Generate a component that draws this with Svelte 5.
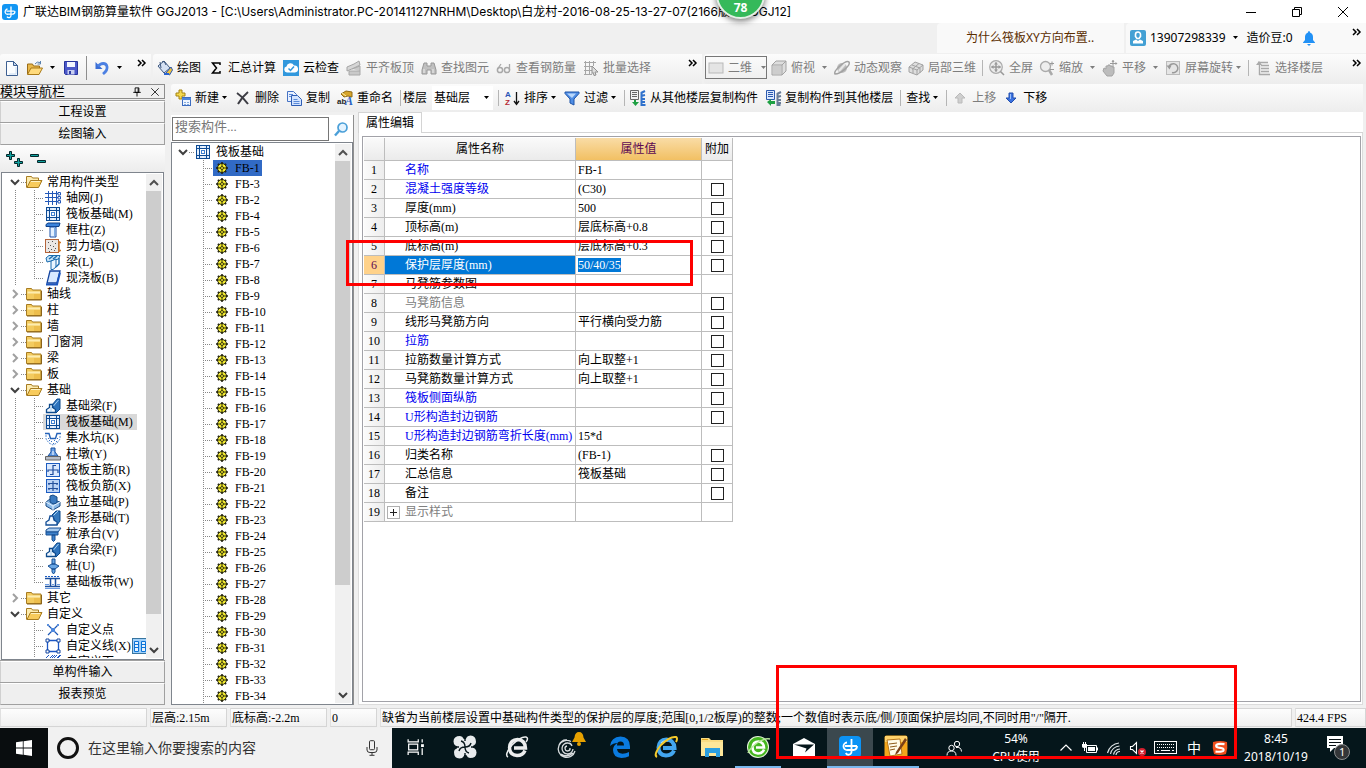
<script>
  const gear =
    '<path d="M7 0h2v16H7zM0 7h16v2H0zM3.200 1.800l11 11-1.400 1.400-11-11zM12.800 1.800l1.400 1.400-11 11-1.400-1.400z" fill="#1b1b08"/><circle cx="8" cy="8" r="6" fill="#f6ee30" stroke="#1b1b08" stroke-width="1.300"/><path d="M8 2.500v3M8 10.500v3M2.500 8h3M10.500 8h3" stroke="#1b1b08" stroke-width="1.200"/><circle cx="8" cy="8" r="2" fill="#f6ee30" stroke="#1b1b08" stroke-width="1.200"/>';
  const raft =
    '<rect x="1.500" y="1.500" width="13" height="13" fill="#dceafc" stroke="#0d4a93"/><path d="M4.500 1v14M11.500 1v14M1 4.500h14M1 11.500h14" stroke="#0d4a93"/><rect x="5" y="5" width="6" height="6" fill="#fff"/><path d="M6 6.500h4M6 9.500h4M6.500 6v4M9.500 6v4" stroke="#3f7fd0"/><path d="M2 8h2M12 8h2M8 2v2M8 12v2" stroke="#fff"/>';
  const beam =
    '<path d="M7 7l5-6h3v10l-4 4z" fill="#2d73bd" stroke="#0d4a8c"/><path d="M8.500 8l5-6" stroke="#a9d2f4"/><path d="M1.500 14.500v-3l3-2V6.500h3v3l3 2v3z" fill="#f2f8ff" stroke="#0d4a8c" stroke-width="1.300"/><path d="M6 9v5" stroke="#9ec9ec"/>';
  const icons = {
    logo: '<rect x="0" y="0" width="16" height="16" rx="3" fill="#1296f3"/><path d="M9 2.500v9a2.200 2.200 0 0 1-4 1.200M4.500 7.200h8M5.500 5a3 3 0 0 0-2.300 3.600A2.500 2.500 0 0 0 6 10.200h5a2.600 2.600 0 0 0 1.800-3" fill="none" stroke="#fff" stroke-width="1.300"/>',
    fnew: '<path d="M2.500 1.500h7l4 4v10h-11z" fill="#fbfdff" stroke="#3d5f91"/><path d="M9.500 1.500v4h4z" fill="#c6d7ee" stroke="#3d5f91"/><path d="M12 7v7H5" fill="none" stroke="#c9dcf2"/>',
    open: '<path d="M.5 14V4h5l1 2h6v3" fill="#e9b84b" stroke="#9a6c17"/><path d="M.5 14.500L4 8h11.500l-3.500 6.500z" fill="#ffda7c" stroke="#a87918"/><path d="M8 4q2-3 5-1.500M13.500 1v3h-3" fill="none" stroke="#5880ad"/>',
    save: '<path d="M1.500 1.500h13v13h-12l-1-1z" fill="#4b58c9" stroke="#27339b"/><path d="M4 2h8v5H4z" fill="#f2f5ff"/><path d="M4.500 10h7v4.500h-7z" fill="#c8cff0"/><path d="M6 11h2v3H6z" fill="#303da3"/>',
    undo: '<path d="M1.500 2v7h7z" fill="#3a6ed6"/><path d="M4 6.500C7 2.500 12 2.500 13 6.500c.7 3-1.500 5.500-4 7.500" fill="none" stroke="#4c80e2" stroke-width="2.800"/>',
    paint: '<path d="M1 6l6-5 6 7-6 5z" fill="#d5e1f4" stroke="#3c567e"/><path d="M4 8L3 2M5 2q2-2 4 3" fill="none" stroke="#3c567e"/><path d="M9 13l5-6 1.500 3-3 5z" fill="#f3c33c" stroke="#2b57ad"/><path d="M7 14h5" stroke="#2b64d0" stroke-width="2"/>',
    sum: '<path d="M12 5V3H4.500l4 5-4 5H12v-2" fill="none" stroke="#000" stroke-width="1.500"/>',
    cloud: '<rect width="16" height="16" fill="#3198dd"/><path d="M4 12.500a3 3 0 0 1-.5-5.900A4 4 0 0 1 11 5.500a3.500 3.500 0 0 1 1 7z" fill="#fff"/><path d="M5.500 8.500l2 2 3.500-4" fill="none" stroke="#3198dd" stroke-width="1.500"/>',
    level: '<path d="M1 7l7-3 5-3 1 4-6 3-7 3z" fill="#d6d6d6" stroke="#a5a5a5"/><path d="M3 11h11v4H3zM6 9l8-3v5" fill="#c9c9c9" stroke="#a8a8a8"/>',
    bino: '<path d="M3 3h3v3h4V3h3l2 7v4h-5v-4H6v4H1v-4z" fill="#c0c0c0" stroke="#989898"/><path d="M3 9v4M12 9v4" stroke="#eee"/>',
    glasses: '<circle cx="4" cy="10" r="2.600" fill="none" stroke="#a8a8a8" stroke-width="1.500"/><circle cx="11" cy="10" r="2.600" fill="none" stroke="#a8a8a8" stroke-width="1.500"/><path d="M1.500 9L5 4M13.500 10V4" stroke="#a8a8a8" stroke-width="1.300"/>',
    batch: '<path d="M1 2.500h12M1 6.500h8M1 10.500h8M1 14.500h8M2.500 1v14M6.500 1v14M10.500 1v5" stroke="#a6a6a6" fill="none"/><path d="M9 6l6 6h-3l1 3-2 .5-1-3-1 1z" fill="#ddd" stroke="#909090"/>',
    flat: '<rect x="1" y="3" width="14" height="10" fill="#e4e4e4" stroke="#b9b9b9"/>',
    cube: '<path d="M1 5l4-4h10v10l-4 4H1z" fill="#dedede" stroke="#a3a3a3"/><path d="M1 5h10v10M11 5l4-4" fill="none" stroke="#a3a3a3"/><path d="M2 6h8v8H2z" fill="#cdcdcd"/>',
    orbit: '<circle cx="8" cy="8" r="5" fill="#bdbdbd"/><path d="M1 14C-1 11 12-1 15 2c2 3-8 12-14 12z" fill="none" stroke="#a1a1a1" stroke-width="1.500"/><path d="M5 11l6-7" stroke="#e8e8e8" stroke-width="2"/>',
    local: '<path d="M1 7l6-5 8 3v5l-6 5-8-3z" fill="#dedede" stroke="#a2a2a2"/><path d="M1 7l8 3v5M9 10l6-5M4 5l8 3v5M5 8.500V13M4 9.500l7-6" fill="none" stroke="#a2a2a2"/>',
    full: '<circle cx="7" cy="7" r="6.300" fill="#ececec" stroke="#aaa" stroke-width="1.200"/><path d="M7 2.500v9M2.500 7h9M11.500 11.500l3.500 3.500" stroke="#999" stroke-width="1.500"/><path d="M7 2L5 4.500h4zM7 12l-2-2.500h4zM2 7l2.500-2v4zM12 7l-2.500-2v4z" fill="#999"/>',
    zoom: '<circle cx="6.500" cy="6.500" r="5" fill="#eee" stroke="#aaa" stroke-width="1.300"/><path d="M10 10l3 5" stroke="#aaa" stroke-width="2.500"/><path d="M11 3.500h4M13 1.500v4M11 9.500h4" stroke="#999"/>',
    pan: '<path d="M2 8l2 1V6h2V5h2v1h2v1h2v6l-2 3H5l-4-5z" fill="#bcbcbc" stroke="#a3a3a3"/><path d="M11 0v7M8 3.500h7" stroke="#999"/><path d="M11 0L9.500 2h3zM15.500 3.500l-2-1.500v3z" fill="#999"/>',
    rot: '<rect x="1.500" y="1.500" width="13" height="13" fill="#e5e5e5" stroke="#bbb"/><path d="M4 7a4.500 4.500 0 1 1 3 5.500" fill="none" stroke="#999" stroke-width="1.500"/><path d="M1.500 5.500l5 0-2 4z" fill="#999"/>',
    floors: '<path d="M3 2.500h10M6 5.500h8M6 8.500h8M6 11.500h8M4 14.500h11M4.500 3v12" fill="none" stroke="#a9a9a9" stroke-width="1.400"/><path d="M1 5l3-4 3 4z" fill="#aaa"/>',
    add: '<path d="M4 0h3v3h3v3H7v3H4V6H1V3h3z" fill="#f4d94e" stroke="#a48313"/><rect x="7.500" y="7.500" width="8" height="8" fill="#eef5ff" stroke="#3c6cc0"/><path d="M7 8h9v2H7z" fill="#4c86dc"/><path d="M9 12.500h2M12 12.500h2M9 14.500h2M12 14.500h2" stroke="#85aade"/>',
    del: '<path d="M2 3q6 4 11 11M13 2Q7 7 3 14" fill="none" stroke="#3d3d44" stroke-width="2"/>',
    copy: '<path d="M1.500 1.500h6l3 3v7h-9z" fill="#e9f1ff" stroke="#4673c4"/><path d="M5.500 5.500h6l4 4v6h-10z" fill="#d3e4ff" stroke="#2e5db4"/><path d="M7.500 9.500h4M7.500 11.500h6M7.500 13.500h6M3 4.500h4M3 6.500h2" stroke="#5c8bd8"/>',
    ren: '<path d="M4 4l5-3 6 1v5l-4-1-4 1z" fill="#d7a52c" stroke="#8f6a14"/><path d="M5 3l4 3" stroke="#fff0a8"/>',
    az: '<path d="M12.500 2v11M10 11l2.500 3.500L15 11" fill="none" stroke="#111" stroke-width="1.300"/>',
    filter: '<path d="M1 2h14v1.500L10 9v6l-4-2V9L1 3.500z" fill="#4f8de4" stroke="#1f54a8"/><path d="M3 3.500h9L8 8z" fill="#b9d7fb"/>',
    from: '<path d="M.5.500h8v9h-8z" fill="#f1f1f1" stroke="#666"/><path d="M2 2.500h5M2 4.500h5M2 6.500h5" stroke="#666"/><path d="M11.500 2v13l4 0M11 3l4-2M11 6l4-1M11 9h4M11 12h4" stroke="#2f71cc" stroke-width="2" fill="none"/><path d="M4 10h2v2h3l-3.500 4L2 12h2z" fill="#1ea043"/>',
    to: '<path d="M1.500.500h8v9h-8z" fill="#dbe8ff" stroke="#2c5aae"/><path d="M3 2.500h5M3 4.500h5M3 6.500h5" stroke="#2c5aae"/><path d="M12.500 3v12l3 0M12 4l4-2M12 7l4-1M12 10h4M12 13h4" stroke="#687c98" stroke-width="2" fill="none"/><path d="M2 12l4-3v2h4v3H6v2z" fill="#1ea043"/>',
    up: '<path d="M8 3l5 5h-3v5H6V8H3z" fill="#cfcfcf" stroke="#bababa"/>',
    down: '<path d="M8 13l5-5h-3V3H6v5H3z" fill="#3b72e0" stroke="#234fae"/><path d="M7 4h1v5H7z" fill="#9dc0fa"/>',
    user: '<rect width="16" height="16" rx="2" fill="#43a0d4"/><path d="M5.500 4.500a2.500 2.500 0 0 1 5 0v2l-1.500 2h-2l-1.500-2z" fill="none" stroke="#fff" stroke-width="1.600"/><path d="M3 13.500v-2.500l3-1.500 2 1.500 2-1.500 3 1.500v2.500z" fill="#fff"/>',
    bell: '<path d="M8 1a1.500 1.500 0 0 1 1 1.500q3 1 3 4.500v3l2 2.500v.5H2v-.500L4 10V7q0-3.500 3-4.500A1.500 1.500 0 0 1 8 1zM6 14h4l-2 2z" fill="#2291f5"/>',
    closed: '<path d="M.5 13.500v-11h5l1 1.500h8.500v9.500z" fill="#f3cb5f" stroke="#a77c22"/><path d="M1.500 5.500h12.500v2H1.500z" fill="#fdecb0"/><path d="M8 13V8h6v5z" fill="#e8b23c" opacity=".5"/><path d="M1 14h14.500V5" fill="none" stroke="#8b641a"/>',
    opened: '<path d="M.5 13.500v-11h5l1 1.500h6v3" fill="#fdecb0" stroke="#a77c22"/><path d="M1 13.500L4.500 6.500H16L12.500 13.500z" fill="#f8cb5c" stroke="#a77c22"/><path d="M5 7.500h9" stroke="#fff3c4"/>',
    axis: '<path d="M0 3.500h13M0 7.500h13M0 11.500h13M3.500 1v14M7.500 1v14M11.500 1v14" stroke="#2459b8" fill="none"/><path d="M13 2.500h2.500v2.500H13zM13 6.500h2.500v2.500H13zM13 10.500h2.500v2.500H13z" fill="#fff" stroke="#2459b8"/>',
    raft,
    col: '<path d="M1 2.500L3 1h12l-1 3.500H1z" fill="#3c84dc" stroke="#0d3f87"/><path d="M5 5h6v10H5z" fill="#e3f0ff" stroke="#1a51a8"/><path d="M9.500 5v9" stroke="#7caee8"/>',
    wall: '<rect x=".5" y="1.500" width="13" height="13" fill="#ebe7e4" stroke="#b4643a"/><path d="M3 4h1v1H3zM7 3h1v1H7zM10 5h1v1h-1zM5 7h1v1H5zM8 8h1v1H8zM3 10h1v1H3zM6 11h1v1H6zM10 10h1v1h-1zM9 12h1v1H9zM4 13h1v1H4z" fill="#555"/><path d="M14 3v11M14 4.500h2M14 12.500h2" stroke="#d07a28" stroke-width="1.500"/>',
    beam1: '<path d="M1 4l3-2.500h11l-1.500 3.500L6 7l-4 1z" fill="#c8e4f8" stroke="#196bae"/><path d="M6 7l5-2v8l-3 2.500H6z" fill="#eaf6ff" stroke="#196bae"/><path d="M4 5l4-3M8 5l4-3M11 13l3-3V4" fill="none" stroke="#196bae" stroke-width="1.400"/>',
    slab: '<path d="M5 1h10l-3 12H2z" fill="#d8e9ff" stroke="#1646a0" stroke-width="1.300"/><path d="M1 14.500h11l3-12" fill="none" stroke="#1d56bd" stroke-width="2"/>',
    beam,
    pit: '<path d="M0 3.500h4l1.500 5h5l1.500-5h4" fill="none" stroke="#2462b8" stroke-width="1.400"/><path d="M1 5v4l3 4 4 2 4-2 3-4V5" fill="none" stroke="#5c90d4" stroke-dasharray="2 1"/><path d="M3 8h1v1H3zM6 11h1v1H6zM9 10h1v1H9zM11 11h1v1h-1zM8 13h1v1H8zM12 8h1v1h-1zM4 10h1v1H4z" fill="#3a72c4"/>',
    pier: '<path d="M6 2h4v4l3 4H3l3-4z" fill="#6aa0e6" stroke="#174f9d"/><path d="M7.500 5h1v4h-1z" fill="#fff"/><path d="M.5 10.500h15v3.500H.5z" fill="#b8bec8" stroke="#666"/>',
    mainbar: '<rect x="1.500" y="1.500" width="13" height="13" fill="#dbe9fd" stroke="#1d5cc0"/><path d="M8 3v10M3 10V8h10v3M8 3.500h3M5 12.500h3" fill="none" stroke="#1d4b9c" stroke-width="1.200"/>',
    negbar: '<rect x="1.500" y="1.500" width="13" height="13" fill="#bcd4f6" stroke="#1d5cc0"/><path d="M3 5.500h10M3 10.500h10M8 3v10M4 5v2M12 5v2M4 10v2M12 10v2" fill="none" stroke="#24509c" stroke-width="1.200"/>',
    indep: '<path d="M1 8l4-3 10 3v4l-7 4-7-4z" fill="#8bb9e7" stroke="#174a84"/><path d="M5 2l3-1 4 2v6l-4 1-3-2z" fill="#3a7ac0" stroke="#174a84"/><path d="M1 8l7 4 7-4M8 12v4" fill="none" stroke="#e6f2ff"/>',
    strip: '<path d="M7 5l4-4h4v10l-3 4z" fill="#3579bd" stroke="#0d4a8c"/><path d="M8 6l5-5" stroke="#a9d2f4"/><path d="M1 15v-3l3-2 1-4h3l1 4 3 2v3z" fill="#f3f9ff" stroke="#134e96" stroke-width="1.300"/>',
    cap: '<path d="M1 4l3-2h12l-3 4H1z" fill="#a3c9f0" stroke="#174f93"/><path d="M1 6h12v3H1zM7 9h3v5l-1.500 1.500L7 14z" fill="#3f82cb" stroke="#174f93"/>',
    pile: '<path d="M7 1h3v5H7zM3 8l4-2h3l4 2-4 3H7zM7 11h3v3l-1.500 2L7 14z" fill="#6aa7e5" stroke="#174f93"/>',
    band: '<path d="M0 2.500h15" stroke="#1b5cc4" stroke-dasharray="2 1"/><path d="M0 4.500h15M5.500 5v7M10.500 5v7M0 12.500h15" stroke="#1b4f9e" stroke-width="1.500"/><path d="M0 10.500h4M7 10.500h2M12 10.500h3M0 14.500h15" stroke="#6c9be0"/>',
    point: '<path d="M3 3l10 10M13 3L3 13" stroke="#1c57b5" stroke-width="1.200"/><path d="M6 6h4v4H6z" fill="#4d88de"/><path d="M2 2h2v2H2zM12 2h2v2h-2z" fill="#5b90dd"/>',
    line: '<path d="M2.500 2.500h11v11h-11z" fill="#fff" stroke="#1c57c5" stroke-width="1.300"/><path d="M1 1h3v3H1zM12 1h3v3h-3zM1 12h3v3H1zM12 12h3v3h-3z" fill="#fff" stroke="#1546a0"/>',
    area: '<path d="M1 4l3-3M5 4l3-3M9 4l3-3M13 4l3-3M1 10l9-9M1 15L15 1" stroke="#1c57c5"/>',
    panes: '<rect x=".5" y=".5" width="15" height="15" fill="#9fd0fa" stroke="#38759f"/><path d="M2.500 3.500h4v10h-4zM9.500 3.500h4v10h-4z" fill="#e5f3ff" stroke="#0b74d8"/><path d="M3 6.500h3M3 9.500h3M10 6.500h3M10 9.500h3" stroke="#0b74d8"/>',
    gear,
    pp: '<path d="M2.500.500h2v3h3v2h-3v3h-2v-3h-3v-2h3z" fill="#11a3a0" stroke="#04272a"/><path d="M10.500 7.500h2v3h3v2h-3v3h-2v-3h-3v-2h3z" fill="#11a3a0" stroke="#04272a"/>',
    mm: '<path d="M.5 3.500h8v2h-8zM7.500 9.500h8v2h-8z" fill="#11a3a0" stroke="#04272a"/>',
    mag: '<circle cx="9.500" cy="6.500" r="4.500" fill="#e3f3ff" stroke="#4a9fd8" stroke-width="1.700"/><path d="M6 10l-4 4.500" stroke="#4a9fd8" stroke-width="2.400"/>',
    pin: '<path d="M5.500 2.500h5v6h-5zM9.500 3v5M3 8.500h10M8 9v5" fill="none" stroke="#000" stroke-width="1.200"/>',
    x: '<path d="M3 3l10 10M13 3L3 13" stroke="#222" stroke-width="1.200"/>',
    win: '<path d="M0 2.300L6.800 1.300v6.300H0zM7.600 1.200L16 0v7.600H7.600zM0 8.400h6.800v6.300L0 13.700zM7.600 8.400H16V16l-8.400-1.200z" fill="#fff"/>',
    mic: '<rect x="5.500" y=".7" width="5" height="9" rx="1" fill="none" stroke="#333"/><path d="M3 7v3q0 2.500 3 2.500h4q3 0 3-2.500V7M8 12.500V15M5.500 15.300h5" fill="none" stroke="#333"/>',
    task: '<path d="M1 1v2.500h9V1M1 15v-2.500h9V15M1.500 5.500h8v5h-8zM13.500 1v3M13.500 9v6" fill="none" stroke="#fff" stroke-width="1.100"/><path d="M12.500 5.500h2.500v2.500h-2.500z" fill="#fff"/>',
    people: '<circle cx="11" cy="4" r="2.700" fill="none" stroke="#fff"/><circle cx="5.500" cy="8" r="2.700" fill="none" stroke="#fff"/><path d="M1 15.500q0-4.500 4.500-4.500T10 15.500M10 7.500q5-1 5.500 4" fill="none" stroke="#fff"/>',
    tup: '<path d="M2.500 10.500L8 5l5.500 5.500" fill="none" stroke="#fff" stroke-width="1.200"/>',
    batt: '<path d="M4.500 5.500h10v7h-10z" fill="none" stroke="#fff"/><path d="M6 7h7v4H6zM15 7.500h1v3h-1z" fill="#fff"/><path d="M0 4h5v2.500q0 1.500-2.500 1.500T0 6.500zM1 2h1v2H1zM3 2h1v2H3zM2 8h1v3H2z" fill="#fff"/>',
    wifi: '<path d="M1.500 13A13 13 0 0 1 13 3M4.500 14A10 10 0 0 1 13.500 6M7.500 14.500A7 7 0 0 1 14 9M10 15a4 4 0 0 1 4-3.500" fill="none" stroke="#dfe5e7" stroke-width="1.200"/>',
    vol: '<path d="M.5 6.500h2l4-4v11l-4-4h-2z" fill="none" stroke="#fff" stroke-width="1.100"/><circle cx="12" cy="12" r="4" fill="#d4202f"/><path d="M10.500 10.500l3 3M13.500 10.500l-3 3" stroke="#fff" stroke-width="1.200"/>',
    sogou: '<path d="M1 2Q8 0 15 2q1 6-1 12-6 2-12 0Q0 8 1 2z" fill="#f04e1c"/><path d="M12.500 4.200Q4 3 4.200 6q0 1.500 4 1.800 4 .4 3.300 2.500-.8 2-8 1.300" fill="none" stroke="#fff" stroke-width="2.200"/>'
  };

  const big = {
    fan: '<g fill="#e8ebed"><path d="M11.500 11.500Q.5 13 .5 6.500.5 1 7 1q5 0 4.500 10.500z"/><path d="M12.500 11.500Q11 .5 17.500.5 23 .5 23 7q0 5-10.500 4.500z"/><path d="M12.500 12.500Q23.500 11 23.500 17.500 23.500 23 17 23q-5 0-4.500-10.500z"/><path d="M11.500 12.500Q13 23.500 6.500 23.500 1 23.500 1 17q0-5 10.500-4.500z"/><path d="M4 4h16v16H4z"/></g><path d="M12 12Q12 7 8 6M12 12q5 0 6-4M12 12q0 5 4 6M12 12q-5 0-6 4" fill="none" stroke="#07171c" stroke-width="1.400"/><path d="M12 1v5M23 12h-5M12 23v-5M1 12h5" stroke="#07171c" stroke-width="1.400"/>',
    ieg: '<path d="M20 15.500q-2 5-8 5-7.500-.500-7.500-8Q5 5 12.500 4.500q7.500.5 8 8.500H9" fill="none" stroke="#eceeee" stroke-width="3.400"/><path d="M3 22Q-1 20 7 10 16 1 21 2q3 1 0 5" fill="none" stroke="#eceeee" stroke-width="1.500"/>',
    swirl: '<path d="M18 16a8.500 8.500 0 1 1-4-9.500M16 14a5.500 5.500 0 1 1-5-6q3 0 4 3M13 13a2.500 2.500 0 1 1-3-2M2 10q3-6 8-5M4 19q6 4 12-1" fill="none" stroke="#d9dddf" stroke-width="1.300"/><path d="M22-3q-4 0-4.500 5.500l-2.500 4.500h14l-2.500-4.500Q26-3 22-3z" fill="#e7a100"/><circle cx="22" cy="9" r="2" fill="#e7a100"/>',
    edge: '<path d="M2 11Q3 2 12.500 1.500 22 2 22 11.500V14H9q.5 4.500 5.500 4.700 3.500 0 6.500-1.700v4.300Q18 23 13.500 23 5 22.500 5 15q0-4.500 4.500-7Q5 8 2 11zM9 10.500h7q0-4-3.500-4T9 10.500z" fill="#0a7be0"/>',
    ie: '<path d="M20 15.500q-2 5-8 5-7.500-.500-7.500-8Q5 5 12.500 4.500q7.500.5 8 8.500H9" fill="none" stroke="#43a6ef" stroke-width="4"/><path d="M7 8q3-3 7-2" fill="none" stroke="#a9dbff" stroke-width="1.200"/><path d="M3 22Q-1 20 7 10 16 1 22 2q2 1 0 5" fill="none" stroke="#f5c92b" stroke-width="2"/>',
    explorer: '<path d="M1 3h8l2 2h12v16H1z" fill="#f9dc84"/><path d="M1 7h22v14H1z" fill="#fde79a"/><path d="M2 4h6v1H2z" fill="#e5a91f"/><path d="M5 22v-9h15v9h-4v-4H9v4z" fill="#2b9fe0"/>',
    green: '<circle cx="12" cy="12" r="11" fill="#e7f5dd"/><circle cx="12" cy="12" r="10" fill="#45b620"/><path d="M18 14.500q-1.500 4-6 4-5.500-.500-5.500-6Q7 6.500 12.500 6.500q5 .5 5.500 6h-8" fill="none" stroke="#fff" stroke-width="2.600"/><path d="M2 18q2-5 9-10t13-4" fill="none" stroke="#b7e79b" stroke-width="1.500"/>',
    mail: '<path d="M12 3l11 6v12H1V9z" fill="#fff"/><path d="M2 9.500h20l-9 8 1.500-4z" fill="#06161b"/>',
    glodon: '<rect x="1" y="1" width="22" height="22" rx="4" fill="#0c93f5"/><path d="M13.500 4v13a3 3 0 0 1-5.700 1M7 11h12M9 7.500a3.800 3.800 0 0 0-3.500 4A3.500 3.500 0 0 0 9.500 15H16a4 4 0 0 0 3-4" fill="none" stroke="#fff" stroke-width="1.800"/>',
    note: '<rect x=".5" y=".5" width="23" height="23" rx="2" fill="#f4a61c"/><path d="M1 1h22v6H1z" fill="#ffd26b"/><path d="M3 5l13-1 2 15-12 2z" fill="#fffbe8" stroke="#b7761a"/><path d="M5 9l8-1M6 12l7-1M6 15l5-1" stroke="#8d5a1b"/><path d="M12 17L21 3l2 2-9 13-3 2z" fill="#7a3f17"/>'
  };

  const kid = (icon, text, extra = {}) => ({ kid: true, icon, text, trunk: true, ...extra });
  const dir = (text, open = false) => ({ text, open, icon: open ? 'opened' : 'closed' });
  const modules = [
    dir('常用构件类型', true),
    kid('axis', '轴网(J)'), kid('raft', '筏板基础(M)'), kid('col', '框柱(Z)'),
    kid('wall', '剪力墙(Q)'), kid('beam1', '梁(L)'), kid('slab', '现浇板(B)', { last: true }),
    dir('轴线'), dir('柱'), dir('墙'), dir('门窗洞'), dir('梁'), dir('板'),
    dir('基础', true),
    kid('beam', '基础梁(F)'), kid('raft', '筏板基础(M)', { current: true }), kid('pit', '集水坑(K)'),
    kid('pier', '柱墩(Y)'), kid('mainbar', '筏板主筋(R)'), kid('negbar', '筏板负筋(X)'),
    kid('indep', '独立基础(P)'), kid('strip', '条形基础(T)'), kid('cap', '桩承台(V)'),
    kid('beam', '承台梁(F)'), kid('pile', '桩(U)'), kid('band', '基础板带(W)', { last: true }),
    dir('其它'),
    dir('自定义', true),
    kid('point', '自定义点', { trunk: false }), kid('line', '自定义线(X)', { trunk: false, panes: true }),
    kid('area', '自定义面', { trunk: false })
  ];

  const members = [1, 3, 2, ...Array.from({ length: 31 }, (_, i) => i + 4)].map((n) => `FB-${n}`);
  let selected = $state('FB-1');

  const props = [
    { name: '名称', value: 'FB-1', tone: 'blue' },
    { name: '混凝土强度等级', value: '(C30)', tone: 'blue', box: true },
    { name: '厚度(mm)', value: '500', box: true },
    { name: '顶标高(m)', value: '层底标高+0.8', box: true },
    { name: '底标高(m)', value: '层底标高+0.3', box: true },
    { name: '保护层厚度(mm)', value: '50/40/35', box: true, active: true },
    { name: '马凳筋参数图', value: '' },
    { name: '马凳筋信息', value: '', tone: 'dim', box: true },
    { name: '线形马凳筋方向', value: '平行横向受力筋', box: true },
    { name: '拉筋', value: '', tone: 'blue', box: true },
    { name: '拉筋数量计算方式', value: '向上取整+1', box: true },
    { name: '马凳筋数量计算方式', value: '向上取整+1', box: true },
    { name: '筏板侧面纵筋', value: '', tone: 'blue', box: true },
    { name: 'U形构造封边钢筋', value: '', tone: 'blue', box: true },
    { name: 'U形构造封边钢筋弯折长度(mm)', value: '15*d', tone: 'blue' },
    { name: '归类名称', value: '(FB-1)', box: true },
    { name: '汇总信息', value: '筏板基础', box: true },
    { name: '备注', value: '', box: true },
    { name: '显示样式', value: '', tone: 'dim', expand: true }
  ];

  const drawTools = [
    { icon: 'paint', text: '绘图' }, { icon: 'sum', text: '汇总计算' }, { icon: 'cloud', text: '云检查' },
    { icon: 'level', text: '平齐板顶', off: true }, { icon: 'bino', text: '查找图元', off: true },
    { icon: 'glasses', text: '查看钢筋量', off: true }, { icon: 'batch', text: '批量选择', off: true }
  ];
  const viewTools = [
    { icon: 'cube', text: '俯视', off: true, menu: true }, { icon: 'orbit', text: '动态观察', off: true },
    { icon: 'local', text: '局部三维', off: true }, { sep: true },
    { icon: 'full', text: '全屏', off: true }, { icon: 'zoom', text: '缩放', off: true, menu: true },
    { icon: 'pan', text: '平移', off: true, menu: true }, { icon: 'rot', text: '屏幕旋转', off: true, menu: true, tight: true },
    { sep: true }, { icon: 'floors', text: '选择楼层', off: true }
  ];
  const editTools = [
    { icon: 'add', text: '新建', menu: true, tight: true }, { icon: 'del', text: '删除' },
    { icon: 'copy', text: '复制' }, { icon: 'ren', text: '重命名', ab: true }, { sep: true }
  ];
  const sortTools = [
    { sep: true }, { icon: 'az', text: '排序', menu: true, tight: true, az: true },
    { icon: 'filter', text: '过滤', menu: true, tight: true }, { sep: true },
    { icon: 'from', text: '从其他楼层复制构件' }, { icon: 'to', text: '复制构件到其他楼层' }, { sep: true },
    { text: '查找', menu: true, tight: true }, { sep: true },
    { icon: 'up', text: '上移', off: true }, { icon: 'down', text: '下移' }
  ];
  const apps = [
    { icon: 'fan', name: '风扇', wide: true }, { icon: 'ieg', name: '浏览器', wide: true }, { icon: 'swirl', name: '提醒', wide: true },
    { icon: 'edge', name: 'Edge' }, { icon: 'ie', name: 'Internet Explorer' }, { icon: 'explorer', name: '文件资源管理器' },
    { icon: 'green', name: '安全浏览器', run: true }, { icon: 'mail', name: '邮件' },
    { icon: 'glodon', name: 'GGJ2013', run: true, front: true }, { icon: 'note', name: '笔记', run: true }
  ];
</script>

{#snippet ic(name)}
  <svg class="ic" viewBox="0 0 16 16" aria-hidden="true">{@html icons[name]}</svg>
{/snippet}

{#snippet caret()}
  <svg class="caret" viewBox="0 0 7 4" aria-hidden="true"><path d="M1 0h5L3.500 3z" fill="currentColor" /></svg>
{/snippet}

{#snippet chev(dirn)}
  <svg class="chev" viewBox="0 0 12 12" aria-hidden="true">
    {#if dirn === 'down'}<path d="M2 4l4 4 4-4" stroke="#404040" />
    {:else if dirn === 'up'}<path d="M2 8l4-4 4 4" stroke="#505050" />
    {:else}<path d="M4 2l4 4-4 4" stroke="#a0a0a0" />{/if}
  </svg>
{/snippet}

{#snippet more()}
  <button class="more" aria-label="更多"><svg viewBox="0 0 10 8" aria-hidden="true"><path d="M1 1l3 3-3 3M5 1l3 3-3 3" /></svg></button>
{/snippet}

{#snippet tools(list)}
  {#each list as t}
    {#if t.sep}
      <span class="sep"></span>
    {:else}
      <button class="tool" class:off={t.off}>
        {#if t.icon}
          <svg class="ic" viewBox="0 0 16 16" aria-hidden="true">
            {@html icons[t.icon]}
            {#if t.az}
              <text x="1" y="7" class="az" fill="#2a55b5">A</text><text x="1" y="15" class="az" fill="#b52a35">Z</text>
            {/if}
            {#if t.ab}
              <text x="0" y="14" class="az" fill="#222">ab</text><text x="8" y="15" class="big-a" fill="#2a62c4">A</text>
            {/if}
          </svg>
        {/if}
        <span>{t.text}</span>
        {#if t.menu}<span class="drop" class:tight={t.tight}>{@render caret()}</span>{/if}
      </button>
    {/if}
  {/each}
{/snippet}

{#snippet scroll(grow, rest)}
  <div class="scroll">
    <button aria-label="向上滚动">{@render chev('up')}</button>
    <div class="thumb" style="flex-grow: {grow}"></div>
    <div style="flex-grow: {rest}"></div>
    <button aria-label="向下滚动">{@render chev('down')}</button>
  </div>
{/snippet}

<div class="screen">
  <header class="title">
    {@render ic('logo')}
    <h1>广联达BIM钢筋算量软件 GGJ2013 - [C:\Users\Administrator.PC-20141127NRHM\Desktop\白龙村-2016-08-25-13-27-07(2166版本).GGJ12]</h1>
    <div class="winctl">
      <button aria-label="最小化"><svg viewBox="0 0 12 12"><path d="M1 6.500h10" /></svg></button>
      <button aria-label="还原"><svg viewBox="0 0 12 12"><path d="M1.500 3.500h7v7h-7zM3.500 3.500v-2h7v7h-2" /></svg></button>
      <button aria-label="关闭"><svg viewBox="0 0 12 12"><path d="M1 1l10 10M11 1L1 11" /></svg></button>
    </div>
    <div class="ball">78</div>
  </header>

  <div class="menubar">
    <a class="tip" href="#tip">为什么筏板XY方向布置..</a>
    <div class="account">
      <button class="tool">{@render ic('user')}<span>13907298339</span><span class="drop">{@render caret()}</span></button>
      <span>造价豆:0</span>
      <button class="tool" aria-label="消息">{@render ic('bell')}</button>
      {@render more()}
    </div>
  </div>

  <div class="bars">
    <div class="bar file">
      <button class="tool" aria-label="新建">{@render ic('fnew')}</button>
      <button class="tool" aria-label="打开">{@render ic('open')}<span class="drop">{@render caret()}</span></button>
      <button class="tool" aria-label="保存">{@render ic('save')}</button>
      <span class="sep dark"></span>
      <button class="tool" aria-label="撤销">{@render ic('undo')}<span class="drop">{@render caret()}</span></button>
      {@render more()}
    </div>
    <div class="bar draw">
      {@render tools(drawTools)}
      {@render more()}
    </div>
    <div class="bar view">
      <label class="dim2">
        {@render ic('flat')}
        <select aria-label="视图维度" disabled><option>二维</option></select>
        {@render caret()}
      </label>
      {@render tools(viewTools)}
      {@render more()}
    </div>
  </div>

  <main>
    <nav class="side">
      <div class="side-head"><span>模块导航栏</span><button aria-label="固定">{@render ic('pin')}</button><button aria-label="关闭">{@render ic('x')}</button></div>
      <button class="stack">工程设置</button>
      <button class="stack">绘图输入</button>
      <div class="pm">
        <button aria-label="全部展开">{@render ic('pp')}</button>
        <button aria-label="全部折叠">{@render ic('mm')}</button>
      </div>
      <div class="tree-box">
        <ul class="tree">
          {#each modules as m}
            {#if m.kid}
              <li class="kid">
                <i class="trunk" class:on={m.trunk}></i><i class="branch" class:last={m.last}></i>
                <span class="label" class:current={m.current}>{@render ic(m.icon)}<span>{m.text}</span></span>
                {#if m.panes}{@render ic('panes')}{/if}
              </li>
            {:else}
              <li>{@render chev(m.open ? 'down' : 'right')}<i class="stub"></i><span class="label">{@render ic(m.icon)}<span>{m.text}</span></span></li>
            {/if}
          {/each}
        </ul>
        {@render scroll(421, 27)}
      </div>
      <button class="stack">单构件输入</button>
      <button class="stack">报表预览</button>
    </nav>

    <section class="work">
      <div class="bar edit">
        {@render tools(editTools)}
        <label for="floor">楼层</label>
        <span class="floor"><select id="floor"><option>基础层</option></select>{@render caret()}</span>
        {@render tools(sortTools)}
      </div>

      <div class="split">
        <aside class="members">
          <div class="find">
            <input type="text" placeholder="搜索构件..." aria-label="搜索构件" />
            <button aria-label="搜索">{@render ic('mag')}</button>
          </div>
          <div class="tree-box">
            <ul class="tree">
              <li class="root">{@render chev('down')}<i class="stub"></i><span class="label">{@render ic('raft')}<span>筏板基础</span></span></li>
              {#each members as m}
                <li class="member">
                  <i class="branch"></i>
                  <button class:sel={m === selected} onclick={() => (selected = m)}>{@render ic('gear')}<span>{m}</span></button>
                </li>
              {/each}
            </ul>
            {@render scroll(425, 101)}
          </div>
        </aside>

        <section class="editor">
          <div class="tabs"><button>属性编辑</button><span></span></div>
          <div class="pane">
            <div class="sheet">
              <table>
                <thead>
                  <tr><th class="no"></th><th class="nm">属性名称</th><th class="val">属性值</th><th class="ck">附加</th></tr>
                </thead>
                <tbody>
                  {#each props as p, i}
                    <tr class:active={p.active}>
                      <th scope="row">{i + 1}</th>
                      <td class="pname {p.tone ?? ''}">
                        {#if p.expand}<button class="plus" aria-label="展开"></button>{/if}{p.name}
                      </td>
                      <td class="pval">
                        {#if p.active}<input type="text" value={p.value} size="7" aria-label={p.name} />{:else}{p.value}{/if}
                      </td>
                      <td class="pbox">{#if p.box}<input type="checkbox" aria-label="附加 {p.name}" />{/if}</td>
                    </tr>
                  {/each}
                </tbody>
              </table>
            </div>
          </div>
        </section>
      </div>
    </section>
  </main>

  <footer class="status">
    <span class="s-a"></span><span class="s-b">层高:2.15m</span><span class="s-c">底标高:-2.2m</span><span class="s-d">0</span>
    <span class="s-e">缺省为当前楼层设置中基础构件类型的保护层的厚度;范围[0,1/2板厚)的整数;一个数值时表示底/侧/顶面保护层均同,不同时用"/"隔开.</span>
    <span class="s-f">424.4 FPS</span>
  </footer>

  <div class="taskbar">
    <button class="start" aria-label="开始">{@render ic('win')}</button>
    <label class="ask">
      <i class="ring"></i>
      <input type="text" placeholder="在这里输入你要搜索的内容" aria-label="搜索" />
      {@render ic('mic')}
    </label>
    <div class="apps">
      <button aria-label="任务视图"><svg class="app-s" viewBox="0 0 16 16">{@html icons.task}</svg></button>
      {#each apps as a}
        <button aria-label={a.name} class:wide={a.wide} class:run={a.run} class:front={a.front}>
          <svg class="app" viewBox="0 0 24 24">{@html big[a.icon]}</svg>
        </button>
      {/each}
    </div>
    <div class="tray">
      <button class="ppl" aria-label="人脉">{@render ic('people')}</button>
      <div class="cpu"><span>54%</span><span>CPU使用</span></div>
      <button aria-label="显示隐藏的图标">{@render ic('tup')}</button>
      <button aria-label="电池">{@render ic('batt')}</button>
      <button aria-label="网络">{@render ic('wifi')}</button>
      <button aria-label="音量">{@render ic('vol')}</button>
      <button class="kb" aria-label="键盘">
        <svg viewBox="0 0 24 14"><rect x=".5" y=".5" width="22" height="12" fill="none" stroke="#fff" /><path d="M3 3.500h18M3 6.500h18" stroke="#fff" stroke-dasharray="1 1" /><path d="M3 9.500h2M7 9.500h9M18 9.500h2" stroke="#fff" /></svg>
      </button>
      <button class="ime">中</button>
      <button class="sg" aria-label="搜狗输入法">{@render ic('sogou')}</button>
      <div class="clock"><span>8:45</span><span>2018/10/19</span></div>
      <button class="note" aria-label="通知">
        <svg viewBox="0 0 24 28"><path d="M1 2h16v12H8l-4 4v-4H1z" fill="#fff" /><path d="M3 5.500h12M3 8.500h12M3 11.500h7" stroke="#081014" /><circle cx="16" cy="18" r="7.500" fill="#343638" stroke="#8b8d8e" /><text x="13" y="22">1</text></svg>
      </button>
    </div>
  </div>

  <div class="mark mark-row"></div>
  <div class="mark mark-tip"></div>
</div>

<style>
  :global(body) { margin: 0; }
  .screen {
    position: relative; display: flex; flex-direction: column; height: 100vh; overflow: hidden;
    background: #f0f0f0; color: #000;
    font: 12px/16px "Liberation Serif", "Noto Sans CJK SC", serif;
  }
  .screen * { box-sizing: border-box; }
  button, input, select { font: inherit; color: inherit; border: 0; padding: 0; margin: 0; background: none; }
  .ic { width: 16px; height: 16px; flex: none; display: block; overflow: visible; }
  .caret { width: 7px; height: 4px; flex: none; display: block; }
  .chev { width: 12px; height: 12px; flex: none; display: block; fill: none; stroke-width: 2; }
  .az { font: bold 8px "Liberation Sans", sans-serif; }
  .big-a { font: italic bold 12px "Liberation Serif", serif; }

  .title, .menubar, .bar, .taskbar { font-family: "Noto Sans", "Noto Sans CJK SC", sans-serif; }
  .title { position: relative; display: flex; align-items: center; height: 23px; flex: none; padding-left: 2px; background: #fff; }
  .title h1 { margin: 0 0 0 5px; font-family: Inter, "Noto Sans CJK SC", sans-serif; font-size: 12px; font-weight: 400; line-height: 20px; white-space: nowrap; }
  .winctl { margin-left: auto; display: flex; }
  .winctl button { width: 46px; height: 20px; display: grid; place-items: center; }
  .winctl svg { width: 12px; height: 12px; fill: none; stroke: #000; }
  .ball {
    position: absolute; left: 716px; top: -30px; width: 49px; height: 49px; border-radius: 50%;
    display: flex; align-items: flex-end; justify-content: center; padding-bottom: 1px;
    background: #35b95a; border: 2px solid #e4efe6; box-shadow: 0 2px 6px #0008; color: #fff; font-weight: 700; z-index: 2;
  }

  .menubar { display: flex; justify-content: flex-end; gap: 2px; height: 31px; flex: none; padding-bottom: 1px; }
  .tip, .account { display: flex; align-items: center; background: #f9f9f9; border-radius: 4px 0 0 0; }
  .tip { width: 187px; padding-left: 29px; color: #5b2d00; text-decoration: none; }
  .account { width: 240px; padding-left: 4px; gap: 8px; }

  .tool { display: flex; align-items: center; gap: 4px; white-space: nowrap; }
  .tool.off { color: #7d7d7d; }
  .drop { padding-left: 2px; }
  .drop.tight { margin-left: -4px; }
  .sep { width: 1px; height: 16px; background: #b5b5b5; flex: none; }
  .sep.dark { height: 24px; background: #8e8e8e; }
  .more { margin-left: auto; align-self: flex-start; padding: 5px 4px 0; }
  .more svg { display: block; width: 10px; height: 8px; fill: none; stroke: #000; stroke-width: 1.5; }
  .bars { display: flex; gap: 2px; height: 30px; flex: none; }
  .bar {
    display: flex; align-items: center; gap: 7px; padding-left: 4px; min-width: 0;
    border-radius: 3px 0 0 3px; background: linear-gradient(#fcfcfc, #ededed);
  }
  .bars .bar { padding-bottom: 3px; }
  .file { width: 151px; }
  .draw { width: 549px; }
  .bar.view { flex: 1; padding-left: 1px; gap: 6px; }
  .view > .dim2 { margin-right: -2px; }
  .dim2 { display: flex; align-items: center; gap: 4px; width: 62px; height: 23px; padding: 0 2px; border: 1px solid #777; color: #7d7d7d; }
  select { appearance: none; opacity: 1; }
  .dim2 select { width: 28px; flex: none; color: #7d7d7d; }

  main { flex: 1; min-height: 0; display: grid; grid-template-columns: 165px minmax(0, 1fr); gap: 6px; }
  .side { display: flex; flex-direction: column; min-height: 0; padding-bottom: 1px; }
  .side-head { display: flex; align-items: center; height: 15px; flex: none; margin-bottom: 2px; border: 1px solid #8d8d8d; border-left: 0; font-size: 13px; line-height: 13px; }
  .side-head span { flex: 1; }
  .side-head .ic { width: 12px; height: 12px; }
  .side-head button { width: 18px; display: grid; place-items: center; }
  .stack { height: 22px; flex: none; border: 1px solid #a0a0a0; border-top-color: #fff; border-left-color: #d0d0d0; box-shadow: 0 -1px #a0a0a0; background: #efefef; }
  .pm { display: flex; align-items: center; gap: 7px; height: 27px; flex: none; padding-left: 7px; background: linear-gradient(#fdfdfd, #ececec); }
  .tree-box { display: flex; flex: 1; min-height: 0; background: #fff; border: 1px solid #7f858d; padding: 1px; }
  .side .tree-box { margin: 0 1px 1px; }
  .tree { flex: 1; min-width: 0; margin: 0; padding: 0; list-style: none; overflow: hidden; }
  .tree li { display: flex; align-items: center; height: 16px; padding-left: 6px; white-space: nowrap; }
  .tree .kid { padding-left: 12px; }
  .label { display: flex; align-items: center; gap: 5px; height: 16px; }
  .kid .label { padding: 0 4px 0 2px; }
  .kid .label + :global(.ic) { margin-left: -3px; }
  .label.current { background: #d9d9d9; }
  .stub { width: 5px; height: 1px; background: repeating-linear-gradient(90deg, #888 0 1px, transparent 1px 2px); }
  .trunk, .branch { height: 16px; flex: none; }
  .trunk { width: 19px; }
  .trunk.on { background: repeating-linear-gradient(#888 0 1px, transparent 1px 2px) 0 0 / 1px 16px no-repeat; }
  .branch {
    width: 9px;
    background:
      repeating-linear-gradient(#888 0 1px, transparent 1px 2px) 0 0 / 1px 16px no-repeat,
      repeating-linear-gradient(90deg, #888 0 1px, transparent 1px 2px) 0 8px / 9px 1px no-repeat;
  }
  .branch.last { background-size: 1px 8px, 9px 1px; }
  .scroll { display: flex; flex-direction: column; width: 16px; flex: none; background: #f0f0f0; }
  .scroll button { height: 17px; flex: none; display: grid; place-items: center; }
  .thumb { width: 15px; background: #cdcdcd; }

  .work { display: flex; flex-direction: column; min-width: 0; min-height: 0; padding: 0 3px 1px 0; }
  .edit { height: 28px; flex: none; }
  .edit .sep { margin-right: -2px; }
  .edit > label { margin: 0 -2px 0 -3px; }
  .floor { display: flex; align-items: center; width: 61px; height: 24px; padding: 0 3px 0 2px; margin-right: -2px; background: #fff; }
  .floor select { flex: 1; min-width: 0; }
  .split { flex: 1; min-height: 0; display: grid; grid-template-columns: 183px minmax(0, 1fr); gap: 4px; }
  .members { display: flex; flex-direction: column; min-height: 0; margin-top: 3px; border-right: 1px solid #8f8f8f; background: #fff; }
  .find { display: flex; align-items: center; height: 27px; flex: none; padding-left: 1px; gap: 4px; }
  .find input { width: 157px; height: 24px; padding: 0 2px 2px; border: 1px solid #767676; background: #fff; }
  .find input::placeholder { color: #777; opacity: 1; font-size: 13px; }
  .tree .root { padding: 0 0 0 4px; }
  .members .stub { width: 6px; }
  .member .branch { width: 10px; }
  .tree .member { padding-left: 30px; }
  .member button { display: flex; align-items: center; gap: 6px; height: 16px; padding: 0 2px; }
  .member :global(.ic) { width: 12px; height: 12px; margin: 0 1px; }
  .member .sel { background: #316ac5; }

  .editor { display: flex; flex-direction: column; min-width: 0; min-height: 0; }
  .tabs { display: flex; height: 21px; flex: none; }
  .tabs button { width: 64px; background: #fff; border: 1px solid #d4d4d4; border-bottom: 0; }
  .tabs span { flex: 1; background: #fff; border-bottom: 1px solid #d4d4d4; }
  .pane { flex: 1; min-height: 0; padding: 3px 1px 2px 3px; border: 1px solid #dcdcdc; border-top: 0; background: #fff; }
  .sheet { height: 100%; padding: 1px; border: 1px solid #a2a2a8; overflow: hidden; }
  table { border-collapse: separate; border-spacing: 0; table-layout: fixed; width: 369px; }
  th, td { height: 19px; padding: 0; border: solid #bdbdbd; border-width: 0 1px 1px 0; font-weight: 400; line-height: 18px; white-space: nowrap; overflow: hidden; }
  thead th { height: 23px; background: linear-gradient(#fafafa, #ebebeb); }
  .no { width: 21px; }
  .nm { width: 191px; }
  .val { width: 126px; }
  thead .val { background: linear-gradient(#f9dca6, #f2c063); color: #5d0a52; }
  tbody th { background: linear-gradient(90deg, #fbfbfb, #ededed); }
  .pname { position: relative; padding-left: 20px; }
  .pname.blue { color: #0000f0; }
  .pname.dim { color: #808080; }
  .pval { padding-left: 2px; }
  .pval input { display: block; field-sizing: content; height: 14px; line-height: 14px; background: #0078d7; color: #fff; }
  .active th { background: #ffd28a; color: #5d0a52; }
  .active .pname { background: #0078d7; color: #fff; }
  .pbox input { display: block; appearance: none; width: 13px; height: 13px; margin: 0 auto; border: 1px solid #222; background: #fff; }
  .plus { position: absolute; left: 2px; top: 3px; width: 13px; height: 13px; border: 1px solid #b0b0b0; background: linear-gradient(#222, #222) center / 7px 1px no-repeat, linear-gradient(#222, #222) center / 1px 7px no-repeat; }

  .status { display: flex; gap: 3px; height: 22px; flex: none; padding: 2px 0 1px; }
  .status span { border: 1px solid #d5d5d5; border-left-color: #e0e0e0; background: linear-gradient(#fdfdfd, #f0f0f0); line-height: 18px; white-space: nowrap; overflow: hidden; padding-left: 1px; }
  .s-a { width: 147px; } .s-b { width: 77px; } .s-c { width: 97px; } .s-d { width: 47px; }
  .s-e { flex: 1; min-width: 0; }
  .s-f { width: 71px; }

  .taskbar { display: flex; height: 40px; flex: none; background: #05161b; color: #fff; }
  .start { width: 48px; background: #090d0f; display: grid; place-items: center; }
  .ask { display: flex; align-items: center; gap: 9px; width: 344px; padding: 0 12px 0 9px; background: #f1f1f1; }
  .ring { width: 22px; height: 22px; border: 3px solid #111; border-radius: 50%; flex: none; }
  .ask input { flex: 1; min-width: 0; font-size: 14px; color: #222; }
  .ask input::placeholder { color: #333; opacity: 1; }
  .apps { display: flex; margin-left: 1px; }
  .apps button { width: 46px; height: 40px; display: grid; place-items: center; border-bottom: 2px solid transparent; }
  .apps .wide { width: 52px; }
  .apps .wide + button:not(.wide) { margin-left: 2px; }
  .apps .run { border-bottom-color: #79b8ee; }
  .apps .front { background: #3b484e; }
  .app { width: 24px; height: 24px; overflow: visible; }
  .app-s { width: 18px; height: 18px; }
  .tray { display: flex; align-items: center; margin-left: auto; }
  .tray button { width: 24px; height: 40px; display: grid; place-items: center; }
  .tray .ppl { margin-right: 24px; }
  .cpu, .clock { display: flex; flex-direction: column; align-items: center; line-height: 18px; }
  .cpu { width: 52px; margin-right: 12px; }
  .clock { width: 84px; }
  .tray .kb { width: 32px; }
  .kb svg { width: 24px; height: 14px; }
  .tray .ime { font-size: 14px; }
  .tray .sg { width: 28px; }
  .tray .note { width: 48px; padding-right: 8px; }
  .note svg { width: 24px; height: 28px; }
  .note text { font: 11px "Noto Sans", sans-serif; fill: #fff; }

  .mark { position: absolute; border: 3px solid #fe0000; pointer-events: none; }
  .mark-row { left: 346px; top: 240px; width: 347px; height: 46px; }
  .mark-tip { left: 776px; bottom: 9px; width: 461px; height: 94px; }
</style>
